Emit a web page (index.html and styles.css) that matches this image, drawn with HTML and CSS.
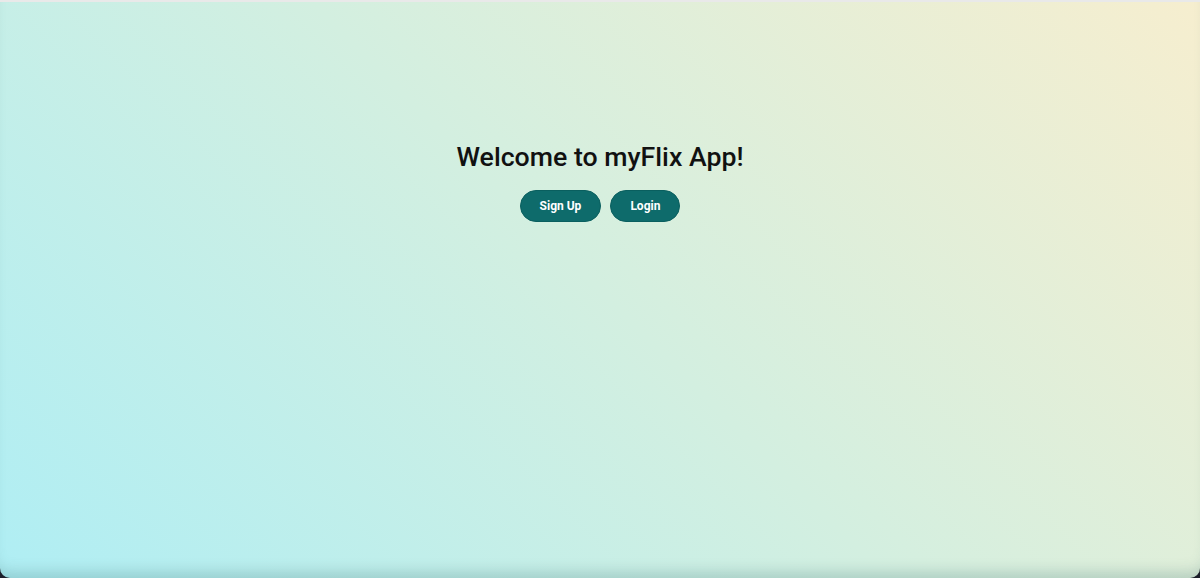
FILE: index.html
```html
<!DOCTYPE html>
<html>
<head>
<meta charset="utf-8">
<link rel="stylesheet" href="styles.css">
</head>
<body>
<div class="window">
  <main class="welcome">
    <h1 class="title">Welcome to myFlix App!</h1>
    <div class="actions">
      <button class="btn">Sign Up</button>
      <button class="btn">Login</button>
    </div>
  </main>
</div>
</body>
</html>
```
FILE: styles.css
```css
html, body {
  margin: 0;
  padding: 0;
  height: 100%;
  background: #1c1f2a;
}
.window {
  box-sizing: border-box;
  height: 578px;
  border-top: 2px solid #e9e9e9;
  border-radius: 0 0 10px 10px;
  background: linear-gradient(45deg, #afeef4 0%, #d3efe0 50%, #f6eecf 100%);
  box-shadow: inset 0 -14px 14px -8px rgba(60, 110, 110, 0.25);
  overflow: hidden;
  font-family: Roboto, "Liberation Sans", sans-serif;
}
.welcome {
  display: flex;
  flex-direction: column;
  align-items: center;
  padding-top: 139px;
}
.title {
  margin: 0;
  font-size: 26.7px;
  line-height: 32px;
  font-weight: 500;
  color: #111;
}
.actions {
  display: flex;
  gap: 9px;
  margin-top: 17px;
}
.btn {
  height: 32px;
  padding: 0 19px;
  border: 1px solid #0a5f5f;
  border-radius: 16px;
  background: #0e6b6b;
  color: #fff;
  font-family: Roboto, "Liberation Sans", sans-serif;
  font-weight: 700;
  font-size: 12px;
}
```
